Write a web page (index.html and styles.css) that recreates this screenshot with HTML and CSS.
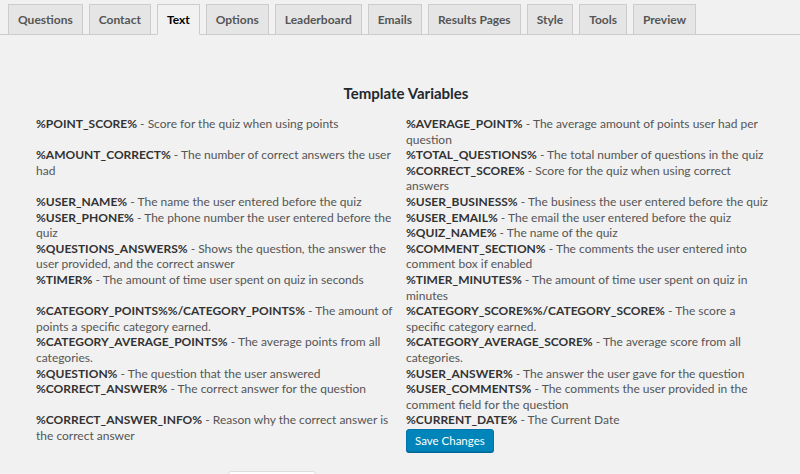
FILE: index.html
```html
<!DOCTYPE html>
<html lang="en">
<head>
  <meta charset="UTF-8">
  <title>Quiz Settings - Text</title>
  <meta name="viewport" content="width=device-width, initial-scale=1.0">
  <link rel="stylesheet" href="styles.css">
</head>
<body>
  <nav class="nav-tabs">
    <a class="nav-tab">Questions</a>
    <a class="nav-tab">Contact</a>
    <a class="nav-tab nav-tab-active">Text</a>
    <a class="nav-tab">Options</a>
    <a class="nav-tab">Leaderboard</a>
    <a class="nav-tab">Emails</a>
    <a class="nav-tab">Results Pages</a>
    <a class="nav-tab">Style</a>
    <a class="nav-tab">Tools</a>
    <a class="nav-tab">Preview</a>
  </nav>

  <main class="tab-content">
    <h3 class="section-title">Template Variables</h3>
    <div class="vars-table">
      <div class="vars-cell">
        <p><b>%POINT_SCORE%</b> - Score for the quiz when using points</p>
      </div>
      <div class="vars-cell">
        <p><b>%AVERAGE_POINT%</b> - The average amount of points user had per question</p>
      </div>

      <div class="vars-cell">
        <p><b>%AMOUNT_CORRECT%</b> - The number of correct answers the user had</p>
      </div>
      <div class="vars-cell">
        <p><b>%TOTAL_QUESTIONS%</b> - The total number of questions in the quiz</p>
        <p><b>%CORRECT_SCORE%</b> - Score for the quiz when using correct answers</p>
      </div>

      <div class="vars-cell">
        <p><b>%USER_NAME%</b> - The name the user entered before the quiz</p>
        <p><b>%USER_PHONE%</b> - The phone number the user entered before the quiz</p>
      </div>
      <div class="vars-cell">
        <p><b>%USER_BUSINESS%</b> - The business the user entered before the quiz</p>
        <p><b>%USER_EMAIL%</b> - The email the user entered before the quiz</p>
        <p><b>%QUIZ_NAME%</b> - The name of the quiz</p>
      </div>

      <div class="vars-cell">
        <p><b>%QUESTIONS_ANSWERS%</b> - Shows the question, the answer the user provided, and the correct answer</p>
      </div>
      <div class="vars-cell">
        <p><b>%COMMENT_SECTION%</b> - The comments the user entered into comment box if enabled</p>
      </div>

      <div class="vars-cell">
        <p><b>%TIMER%</b> - The amount of time user spent on quiz in seconds</p>
      </div>
      <div class="vars-cell">
        <p><b>%TIMER_MINUTES%</b> - The amount of time user spent on quiz in minutes</p>
      </div>

      <div class="vars-cell">
        <p><b>%CATEGORY_POINTS%%/CATEGORY_POINTS%</b> - The amount of points a specific category earned.</p>
      </div>
      <div class="vars-cell">
        <p><b>%CATEGORY_SCORE%%/CATEGORY_SCORE%</b> - The score a specific category earned.</p>
      </div>

      <div class="vars-cell">
        <p><b>%CATEGORY_AVERAGE_POINTS%</b> - The average points from all categories.</p>
      </div>
      <div class="vars-cell">
        <p><b>%CATEGORY_AVERAGE_SCORE%</b> - The average score from all categories.</p>
      </div>

      <div class="vars-cell">
        <p><b>%QUESTION%</b> - The question that the user answered</p>
        <p><b>%CORRECT_ANSWER%</b> - The correct answer for the question</p>
      </div>
      <div class="vars-cell">
        <p><b>%USER_ANSWER%</b> - The answer the user gave for the question</p>
        <p><b>%USER_COMMENTS%</b> - The comments the user provided in the comment field for the question</p>
      </div>

      <div class="vars-cell">
        <p><b>%CORRECT_ANSWER_INFO%</b> - Reason why the correct answer is the correct answer</p>
      </div>
      <div class="vars-cell">
        <p><b>%CURRENT_DATE%</b> - The Current Date</p>
        <button class="button-primary">Save Changes</button>
      </div>
    </div>

    <div class="footer-box"></div>
  </main>
</body>
</html>
```

FILE: styles.css
```css
* {
  box-sizing: border-box;
  margin: 0;
  padding: 0;
}
body {
  background-color: #f1f1f1;
  color: #555;
  font-family: Lato, "Open Sans", sans-serif;
  font-size: 12px;
  overflow: hidden;
}

.nav-tabs {
  display: flex;
  gap: 6px;
  padding: 4px 0 0 8px;
  border-bottom: 1px solid #ccc;
}
.nav-tab {
  height: 31px;
  margin-bottom: -1px;
  padding: 0 9px;
  border: 1px solid #ccc;
  background-color: #e5e5e5;
  color: #555;
  font-size: 12px;
  font-weight: 700;
  line-height: 29px;
}
.nav-tab-active {
  border-bottom-color: #f1f1f1;
  background-color: #f1f1f1;
  color: #000;
}

.tab-content {
  width: 740px;
  margin-left: 36px;
}
.section-title {
  margin-top: 49px;
  color: #23282d;
  font-size: 15px;
  font-weight: 700;
  text-align: center;
  line-height: 18px;
}
.vars-table {
  display: grid;
  grid-template-columns: 370px 370px;
  align-items: start;
  margin-top: 14px;
  line-height: 15.6px;
}
.vars-cell {
  padding-right: 4px;
}
.vars-cell b {
  color: #333;
  font-weight: 700;
}

.button-primary {
  display: block;
  height: 23px;
  margin-top: 1px;
  padding: 0 8px;
  border: 1px solid #0073aa;
  border-radius: 3px;
  background-color: #0085ba;
  box-shadow: 0 1px 0 #006799;
  color: #fff;
  font-family: inherit;
  font-size: 11.5px;
}

.footer-box {
  width: 88px;
  height: 20px;
  margin: 19px 0 0 192px;
  border: 1px solid #ddd;
  border-radius: 3px;
  background-color: #fff;
}
```
